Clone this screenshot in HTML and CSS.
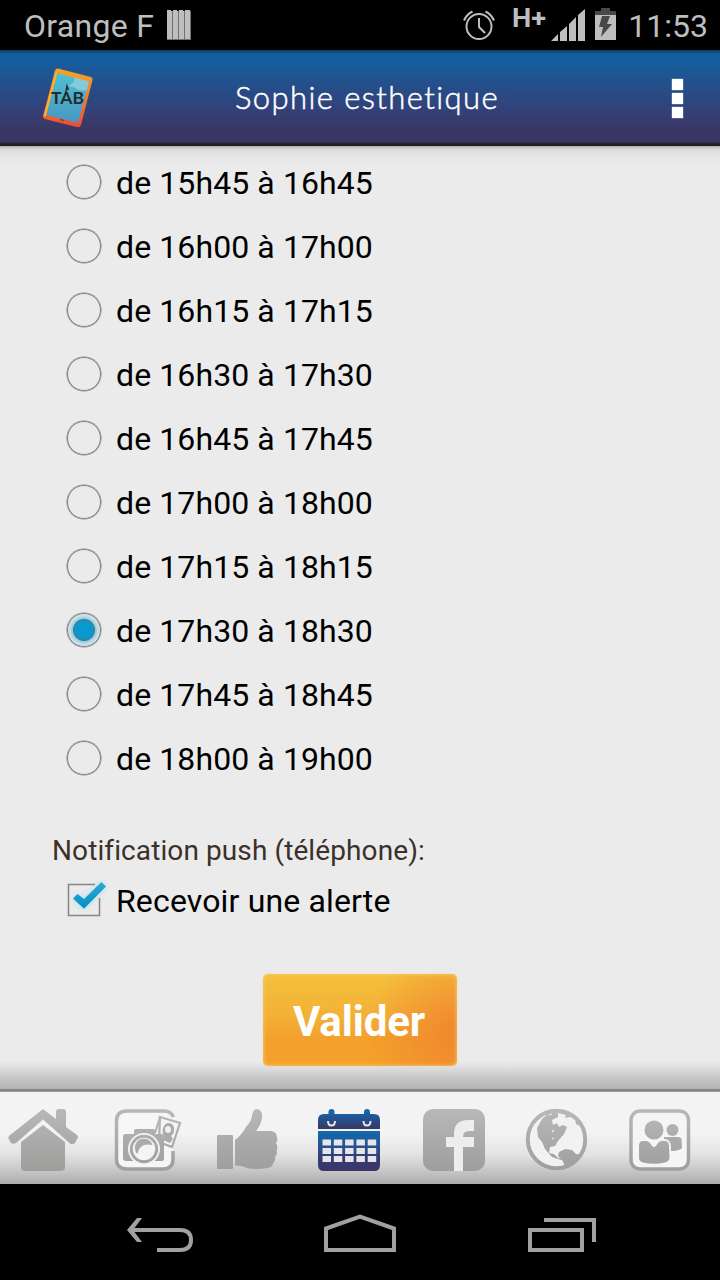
FILE: index.html
```html
<!DOCTYPE html>
<html lang="fr">
<head>
<meta charset="utf-8">
<title>Sophie esthetique</title>
<link rel="stylesheet" href="styles.css">
</head>
<body>
<div class="screen">
  <div class="status">
    <span class="carrier">Orange F</span>
    <svg class="bars" viewBox="166 9 26 32" width="26" height="32"><path d="M167 10h4v1h2v-1h4v1h2v-1h4v1h2v-1h5v30h-23z" fill="#bebebe"/><path d="M167 39.5h24M172.500 11v29M178.500 11v29M184.500 11v29M190.500 11v29" stroke="#707070" stroke-width="1" fill="none"/></svg>
    <svg class="indicators" viewBox="460 0 160 50" width="160" height="50">
      <g fill="none" stroke="#bebebe" stroke-width="2"><circle cx="479" cy="26.500" r="12.500"/><path d="M479 18v9l6 6M464 20.500q2.500-6 8.500-9M494 20.500q-2.500-6-8.500-9"/></g>
      <text class="network" x="512" y="27" textLength="34" lengthAdjust="spacingAndGlyphs">H+</text>
      <path fill="#bebebe" d="M551 41l7-7v7zM560 41v-9l7-6v15zM569 41V24l7-7v24zM578 41V15l7-6v32z"/>
      <path fill="#484848" d="M601 8h9v3h6v4h-21v-4h6z"/><path fill="#bebebe" d="M595 15h21v25h-21z"/><path fill="#484848" d="M602 16h8l-3 8h5l-11 13 2-10h-4z"/>
    </svg>
    <span class="clock">11:53</span>
  </div>

  <div class="header">
    <svg class="logo" viewBox="40 64 56 68" width="56" height="68">
      <defs>
        <linearGradient id="frame" x1="0" y1="0" x2="0" y2="1"><stop offset="0" stop-color="#f9a41f"/><stop offset=".45" stop-color="#f08230"/><stop offset="1" stop-color="#f04a35"/></linearGradient>
        <linearGradient id="glass" x1="0" y1="0" x2="0" y2="1"><stop offset="0" stop-color="#50c0d0"/><stop offset="1" stop-color="#4697c2"/></linearGradient>
      </defs>
      <path d="M58 68.500L91 77q2 1 1.500 3L81 125q-1 2.500-3 2.300L44.500 119q-2-1-1.500-3L55 70.500q1-2.200 3-2z" fill="url(#frame)"/>
      <path d="M57 73l32 8.500-11 41.500-32-8z" fill="url(#glass)"/>
      <path d="M75 77.500l14 4-2.500 9q-8 1-11.500-3-4 0-7-2 6-1 7-8z" fill="#b5e1e9" opacity=".5"/>
      <path d="M43.500 116l2.300.7L57.200 73l-1.600-1z" fill="#fcb32a"/>
      <path d="M60 119.500l4 1" stroke="#9b3c2c" stroke-width="1.500"/>
      <text class="logo-text" x="51" y="104" textLength="33" lengthAdjust="spacingAndGlyphs">TAB</text>
      <path d="M65.500 94L67 86l1.500 4" fill="none" stroke="#252b30" stroke-width="1.500"/>
    </svg>
    <h1 class="title">Sophie esthetique</h1>
    <div class="overflow"><i class="dot"></i><i class="dot"></i><i class="dot"></i></div>
  </div>

  <div class="content">
    <ul class="slots">
      <li class="slot"><i class="radio"></i><span class="slot-text">de 15h45 à 16h45</span></li>
      <li class="slot"><i class="radio"></i><span class="slot-text">de 16h00 à 17h00</span></li>
      <li class="slot"><i class="radio"></i><span class="slot-text">de 16h15 à 17h15</span></li>
      <li class="slot"><i class="radio"></i><span class="slot-text">de 16h30 à 17h30</span></li>
      <li class="slot"><i class="radio"></i><span class="slot-text">de 16h45 à 17h45</span></li>
      <li class="slot"><i class="radio"></i><span class="slot-text">de 17h00 à 18h00</span></li>
      <li class="slot"><i class="radio"></i><span class="slot-text">de 17h15 à 18h15</span></li>
      <li class="slot"><i class="radio radio-on"></i><span class="slot-text">de 17h30 à 18h30</span></li>
      <li class="slot"><i class="radio"></i><span class="slot-text">de 17h45 à 18h45</span></li>
      <li class="slot"><i class="radio"></i><span class="slot-text">de 18h00 à 19h00</span></li>
    </ul>
    <div class="label">Notification push (téléphone):</div>
    <div class="check-row">
      <svg viewBox="60 874 54 54" width="54" height="54">
        <defs><linearGradient id="tick" x1="0" y1="0" x2="0" y2="1"><stop offset="0" stop-color="#2da9d6"/><stop offset="1" stop-color="#058fc4"/></linearGradient></defs>
        <path class="tick-glow" d="M74 899l4-4 6 5.500 17-18 4.500 4L84 908.500z"/>
        <path d="M95 884.500H68.500v31h31V898" fill="none" stroke="#858585" stroke-width="1.500"/>
        <path d="M73 898.500l4.500-4.500 6.500 5 17.500-17 4.500 4.500-22 22.300z" fill="url(#tick)"/>
      </svg>
      <span class="check-text">Recevoir une alerte</span>
    </div>
    <button class="submit">Valider</button>
  </div>

  <div class="tabs">
    <svg viewBox="-9 1092 103 92" width="103" height="92">
      <defs>
        <linearGradient id="grey" gradientUnits="userSpaceOnUse" x1="0" y1="1109" x2="0" y2="1171"><stop offset="0" stop-color="#b8b8b8"/><stop offset="1" stop-color="#9e9e9d"/></linearGradient>
        <linearGradient id="blueTop" gradientUnits="userSpaceOnUse" x1="0" y1="1110" x2="0" y2="1129"><stop offset="0" stop-color="#126ab0"/><stop offset="1" stop-color="#3a3667"/></linearGradient>
        <linearGradient id="blue" gradientUnits="userSpaceOnUse" x1="0" y1="1131" x2="0" y2="1171"><stop offset="0" stop-color="#126bb0"/><stop offset=".7" stop-color="#363b74"/><stop offset="1" stop-color="#3a3667"/></linearGradient>
      </defs>
      <g fill="url(#grey)"><path d="M43 1109l13 10v-7q0-3 3-3h4q3 0 3 3v15l11 8q2 2 0 4l-2 4q-2 2-5 .5L43 1119.500l-27 23.500q-3 1.500-5 0l-2-3.500q-1.500-2 .5-4z"/><path d="M43 1125l22 17v25q0 4-4 4H25q-4 0-4-4v-25z"/></g>
    </svg>
    <svg viewBox="94 1092 103 92" width="103" height="92">
      <rect x="116.500" y="1111" width="57" height="58" rx="10" fill="#f6f6f6"/>
      <path d="M173.500 1117q-3-6-9-6H127q-10.500 0-10.500 10v38q0 10 10.500 10h36q10 0 10-10v-8" fill="none" stroke="url(#grey)" stroke-width="3.500"/>
      <path d="M160 1117l20 6-8 24-13-5z" fill="#f4f4f4" stroke="url(#grey)" stroke-width="2.200"/>
      <path d="M160 1117l-5 16" stroke="url(#grey)" stroke-width="2"/>
      <path d="M168 1123c7 0 7 7 5 11l-2 2 2 3-3 4-7-3 1-4-1-2c-1-6 1-10 5-11z" fill="#aaa"/><ellipse cx="168" cy="1129.500" rx="3" ry="3.500" fill="#f1f1f1"/>
      <path d="M123 1137q0-3 3-3h8v-3q0-2 2-2h17q2 0 2 2v3h6q3 0 3 3v22q0 2-3 2h-35q-3 0-3-3z" fill="url(#grey)"/>
      <circle cx="144" cy="1149" r="16" fill="#f4f4f4"/><circle cx="144" cy="1149" r="12.700" fill="#f4f4f4" stroke="url(#grey)" stroke-width="3"/>
      <path d="M135 1149a9 9 0 0 1 17.500-4q-13-3-15 9-2.500-2-2.500-5z" fill="#aaa"/>
    </svg>
    <svg viewBox="197 1092 103 92" width="103" height="92">
      <g fill="url(#grey)"><path d="M218 1135h14q1 0 1 1v32q0 1-1 1h-14q-1 0-1-1v-32q0-1 1-1z"/><path d="M235 1140q6-4 11-13 5-5 6-11 1-7 5-7 6 1 5 9-1 7-6 13h13c5 0 8 2 7.500 5q2 4-.5 7 2.500 4 .5 7 1.500 4-1.500 7 1 4-2 6 0 4-5 5-10 1.500-19 .5-8-3-14-3z"/></g>
    </svg>
    <svg viewBox="300 1092 103 92" width="103" height="92">
      <path d="M328.500 1114v-2q0-3 3-3t3 3v2h29.500v-2q0-3 3-3t3 3v2h4q6 0 6 6v9h-62v-9q0-6 6-6z" fill="url(#blueTop)"/>
      <path d="M328 1121q0 4.500 3.500 4.500t3.500-4.500M363.500 1121q0 4.500 3.500 4.500t3.500-4.500" fill="none" stroke="#e6e6ec" stroke-width="2"/>
      <path d="M318 1131h62v34q0 6-6 6h-50q-6 0-6-6z" fill="url(#blue)"/>
      <path d="M322.500 1142.500h54M322.500 1151h54M322.500 1159h54" stroke="#e6e6e9" stroke-width="6" stroke-dasharray="8.500 2.800"/>
    </svg>
    <svg viewBox="403 1092 103 92" width="103" height="92">
      <rect x="423" y="1109" width="62" height="62" rx="10" fill="url(#grey)"/>
      <path d="M454 1171v-24h-8v-10h8v-3q0-14 14-14h6v11h-5q-6 0-6 6h11v10h-11v24z" fill="#ededed"/>
    </svg>
    <svg viewBox="506 1092 103 92" width="103" height="92">
      <circle cx="556.500" cy="1139.500" r="28.700" fill="#f2f2f2" stroke="url(#grey)" stroke-width="4"/>
      <path d="M550 1112l8 1 0 4-6 3 1 5 4-2 2 4 4-2 4 2-3 7-6 7-3 5-5 1-1 6 5 1 4 4 8 1-5 1-9-3-7-8-3-7-4-5-1-9 5-9z" fill="url(#grey)"/>
      <path d="M558 1111q16-1 25 13l2 9-5-7-4-2-1-6-6-1-4 1 1-3-8-2z" fill="url(#grey)"/>
      <path d="M559 1152l6-3 7 1 4 4 6 1q-5 9-16 13l-4-8-4-4z" fill="url(#grey)"/>
      <path d="M549 1115l3-1M552 1132l2-2M552 1139l2-1" stroke="#eee" stroke-width="1.200"/>
    </svg>
    <svg viewBox="609 1092 103 92" width="103" height="92">
      <rect x="631" y="1111" width="57.500" height="58" rx="9" fill="#f5f5f5" stroke="url(#grey)" stroke-width="3.500"/>
      <g fill="url(#grey)"><circle cx="654" cy="1130" r="9.500"/><circle cx="672.500" cy="1130" r="6"/><path d="M664 1137h14q3 0 3.500 2l.5 8q0 2-2 2.500-4 1.500-9 1.500v-4q0-5-3-7-2-1-4-1z"/><path d="M643 1141h4q3 1 5 5 2 2 4 0 2-4 5-5h4q4 0 4 5l.5 12q-.5 3-4.500 4.500-11 2.500-22 0-4-1.500-4-4.500v-12q0-5 4-5z"/></g>
    </svg>
  </div>

  <div class="nav">
    <svg viewBox="120 1184 80 96" width="80" height="96"><path d="M130 1230h50q11 0 11 10t-11 10h-23" fill="none" stroke="#a1a1a1" stroke-width="4"/><path d="M127 1230l10-12h5l-9 12 9 12h-5z" fill="#a1a1a1"/></svg>
    <svg viewBox="320 1184 80 96" width="80" height="96"><path d="M326 1250v-21.500l34-12 34 12v21.500z" fill="none" stroke="#a1a1a1" stroke-width="4"/></svg>
    <svg viewBox="520 1184 80 96" width="80" height="96"><path d="M530 1230h52v20h-52zM544 1220h50v22" fill="none" stroke="#a1a1a1" stroke-width="4"/></svg>
  </div>
</div>
</body>
</html>
```

FILE: styles.css
```css
* { box-sizing: border-box; }
body { margin: 0; background: #000; font-family: Roboto, sans-serif; }
svg { display: block; flex: none; }
.screen { width: 720px; height: 1280px; display: flex; flex-direction: column; overflow: hidden; }

.status { height: 50px; display: flex; align-items: center; background: #000; color: #bebebe; font-size: 32px; padding: 0 12px 0 24px; }
.carrier { width: 142px; padding-top: 2px; letter-spacing: .3px; white-space: nowrap; }
.indicators { margin-left: auto; }
.clock { width: 88px; padding-top: 2px; text-align: right; white-space: nowrap; }
.network { font: bold 25px Roboto, sans-serif; fill: #bebebe; }

.header { height: 96px; flex: none; display: flex; align-items: center; padding: 0 36px 0 40px; color: #fff;
  background: linear-gradient(#103c60 0, #124a78 2px, #135e9f 4px, #155e9f 10px, #244f8a 35px, #32427a 58px, #393765 78px, #393562 92px, #231f27 94px, #211d22 96px); }
.title { margin: 0; flex: 1; padding: 0 0 3px 139px; font: 300 31px Lato, sans-serif; letter-spacing: 1.4px; -webkit-text-stroke: .5px #fff; white-space: nowrap; }
.overflow { display: flex; flex-direction: column; gap: 3px; padding-right: 1px; }
.dot { width: 11px; height: 11px; background: #fff; box-shadow: 0 0 1px #fff; }

.content { height: 946px; flex: none; display: flex; flex-direction: column; padding-top: 4px;
  background: linear-gradient(#a9a9a7 0, #cfcfce 2px, #dfdfdf 5px, #e6e6e6 10px, #ebebeb 18px, #ebebeb 915px, #dedede 922px, #c6c6c6 932px, #b3b3b3 943px, #858585 943px, #858585 945px, #b0b0b0 946px); }
.slots { list-style: none; margin: 0; padding: 0 0 0 67px; }
.slot { height: 64px; display: flex; align-items: center; gap: 15px; font-size: 32px; letter-spacing: .1px; color: #000; white-space: nowrap; }
.slot-text { padding-top: 2px; }
.radio { width: 34px; height: 34px; border-radius: 50%; border: 1px solid #828282; box-shadow: 0 0 0 .6px #909090; }
.radio-on { background: radial-gradient(circle, #0799d0 0, #0799d0 9px, #457f96 9.500px, #457f96 10.500px, #8dcce2 11.500px, #c2dfe8 14px, #e4e9ea 17px); }
.label { height: 46px; margin-top: 38px; padding-left: 52px; font-size: 28px; line-height: 46px; letter-spacing: .1px; color: #3b302a; }
.check-row { height: 54px; display: flex; align-items: center; padding-left: 60px; font-size: 32px; letter-spacing: .15px; color: #000; }
.check-text { padding: 0 0 0 2px; }
.tick-glow { fill: #9ddcf2; filter: blur(3px); }
.submit { width: 194px; height: 92px; margin: 46px 0 0 263px; padding: 2px 2px 0 0; border: 0; border-radius: 5px; color: #fff; font: bold 42px Roboto, sans-serif; letter-spacing: -.1px;
  background: radial-gradient(ellipse 90px 90px at 100% 65%, #f0872e, rgba(240, 137, 46, 0)), linear-gradient(#f4c03b 0, #f3b136 45%, #f3a02c 70%, #f3a12c 100%);
  box-shadow: inset 0 0 4px #f8cf7a, 0 0 2px #f6d58e; }

.tabs { height: 92px; flex: none; display: flex; margin-left: -9px; width: 729px; background: linear-gradient(#f4f4f4 0, #f3f3f3 45%, #e3e3e3 68%, #c4c4c4 87%, #acacac 100%); }
.nav { height: 96px; flex: none; display: flex; justify-content: space-between; padding: 0 120px; background: #000; }
.logo-text { font: bold 17px Lato, sans-serif; fill: #252b30; }
```
